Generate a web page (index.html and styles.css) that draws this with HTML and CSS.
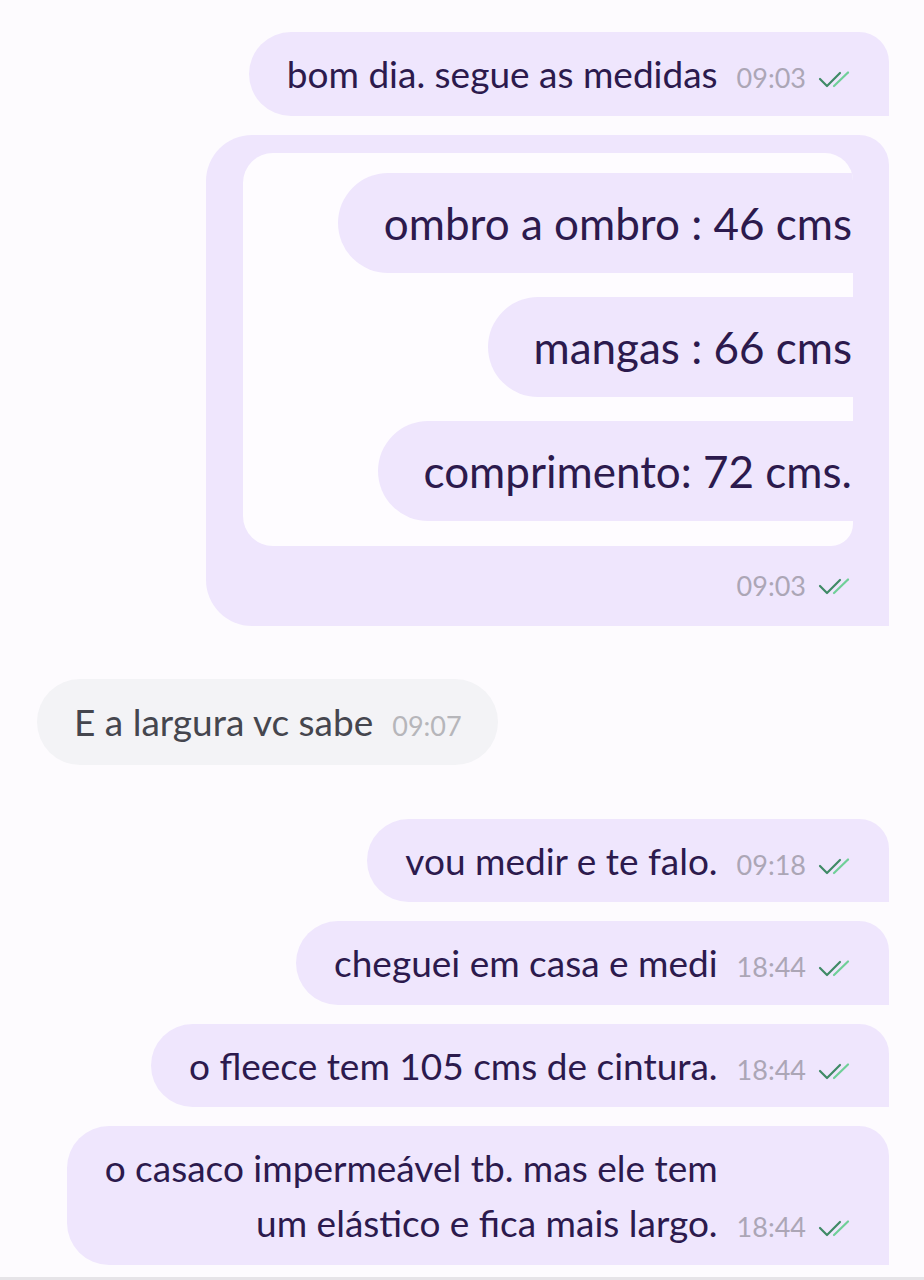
FILE: index.html
```html
<!DOCTYPE html>
<html lang="pt">
<head>
<meta charset="utf-8">
<title>Chat</title>
<link rel="stylesheet" href="styles.css">
</head>
<body>
<div class="chat">
  <div class="msg out">
    <span class="text">bom dia. segue as medidas</span>
    <span class="meta"><span class="time">09:03</span><svg class="ticks" viewBox="0 0 34 18" width="34" height="18"><path d="M2 9 L9 16 L22 3" class="t1"/><path d="M16 16 L30 2.5" class="t2"/></svg></span>
  </div>

  <div class="msg out media">
    <div class="photo">
      <div class="pbubble">ombro a ombro : 46 cms</div>
      <div class="pbubble">mangas : 66 cms</div>
      <div class="pbubble">comprimento: 72 cms.</div>
    </div>
    <div class="meta media-meta"><span class="time">09:03</span><svg class="ticks" viewBox="0 0 34 18" width="34" height="18"><path d="M2 9 L9 16 L22 3" class="t1"/><path d="M16 16 L30 2.5" class="t2"/></svg></div>
  </div>

  <div class="msg in">
    <span class="text">E a largura vc sabe</span>
    <span class="meta"><span class="time">09:07</span></span>
  </div>

  <div class="msg out">
    <span class="text">vou medir e te falo.</span>
    <span class="meta"><span class="time">09:18</span><svg class="ticks" viewBox="0 0 34 18" width="34" height="18"><path d="M2 9 L9 16 L22 3" class="t1"/><path d="M16 16 L30 2.5" class="t2"/></svg></span>
  </div>

  <div class="msg out">
    <span class="text">cheguei em casa e medi</span>
    <span class="meta"><span class="time">18:44</span><svg class="ticks" viewBox="0 0 34 18" width="34" height="18"><path d="M2 9 L9 16 L22 3" class="t1"/><path d="M16 16 L30 2.5" class="t2"/></svg></span>
  </div>

  <div class="msg out">
    <span class="text">o fleece tem 105 cms de cintura.</span>
    <span class="meta"><span class="time">18:44</span><svg class="ticks" viewBox="0 0 34 18" width="34" height="18"><path d="M2 9 L9 16 L22 3" class="t1"/><path d="M16 16 L30 2.5" class="t2"/></svg></span>
  </div>

  <div class="msg out">
    <span class="text multi">o casaco impermeável tb. mas ele tem<br>um elástico e fica mais largo.</span>
    <span class="meta"><span class="time">18:44</span><svg class="ticks" viewBox="0 0 34 18" width="34" height="18"><path d="M2 9 L9 16 L22 3" class="t1"/><path d="M16 16 L30 2.5" class="t2"/></svg></span>
  </div>
</div>
<div class="bottom-bar"></div>
</body>
</html>
```

FILE: styles.css
```css
html, body {
  margin: 0;
  padding: 0;
}

body {
  background: #fdfbfe;
  font-family: Lato, "Noto Sans", sans-serif;
  width: 924px;
  height: 1280px;
  overflow: hidden;
  position: relative;
}

.chat {
  display: flex;
  flex-direction: column;
  gap: 19px;
  padding: 32px 35px 0 37px;
}

.msg {
  display: flex;
  align-items: last baseline;
  padding: 14px 37px 14.5px 38px;
  line-height: 55px;
  font-size: 37px;
}

.text {
  white-space: nowrap;
}

.out {
  align-self: flex-end;
  background: #efe6fd;
  color: #2c1a4d;
  border-radius: 42px 30px 0 42px;
}

.in {
  align-self: flex-start;
  background: #f3f3f6;
  color: #45464e;
  border-radius: 43px;
  margin-top: 34px;
  margin-bottom: 35px;
  padding: 15.5px 36px 15.5px 37px;
}

.text.multi {
  text-align: right;
}

.meta {
  display: inline-flex;
  align-items: baseline;
  gap: 12px;
  margin-left: 19px;
  white-space: nowrap;
  line-height: 1;
}

.time {
  font-size: 27px;
  color: #aca6b6;
}

.in .time {
  color: #b6b6ba;
}

.ticks {
  margin-bottom: -3px;
  fill: none;
  stroke-width: 2.2;
  stroke-linecap: round;
  stroke-linejoin: round;
}

.ticks .t1 {
  stroke: #3f8a66;
}

.ticks .t2 {
  stroke: #6fcf98;
}

/* media message */
.msg.media {
  flex-direction: column;
  align-items: stretch;
  padding: 18px 36px 0 37px;
  width: 610px;
  border-radius: 46px 30px 0 46px;
}

.photo {
  background: #fefcff;
  border-radius: 30px 28px 22px 30px;
  overflow: hidden;
  padding: 20px 0 25px;
  display: flex;
  flex-direction: column;
  align-items: flex-end;
  gap: 24px;
}

.pbubble {
  background: #efe6fd;
  color: #2c1a4d;
  height: 100px;
  line-height: 100px;
  font-size: 44px;
  padding-left: 46px;
  padding-right: 1px;
  border-radius: 50px 0 0 50px;
  white-space: nowrap;
}

.media-meta {
  align-self: flex-end;
  align-items: center;
  height: 80px;
  margin-right: 1px;
}

.media-meta .ticks {
  margin-bottom: 0;
}

.bottom-bar {
  position: absolute;
  left: 0;
  right: 0;
  bottom: 0;
  height: 3px;
  background: #e6e4e8;
}
```
